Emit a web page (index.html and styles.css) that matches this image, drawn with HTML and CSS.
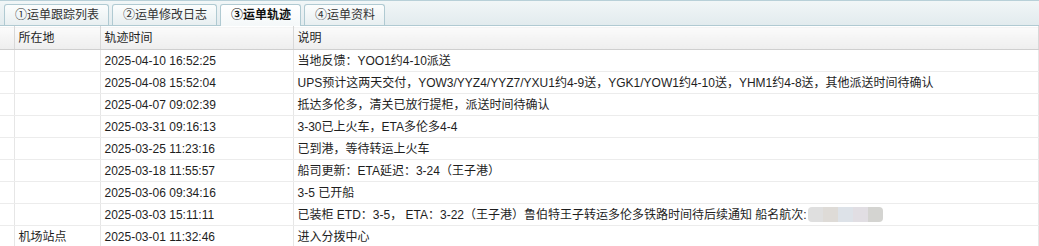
FILE: index.html
```html
<!DOCTYPE html>
<html lang="zh-CN">
<head>
  <meta charset="UTF-8">
  <title>运单轨迹</title>
  <link rel="stylesheet" href="styles.css">
</head>
<body>
  <div class="tabs">
    <div class="tab">①运单跟踪列表</div>
    <div class="tab">②运单修改日志</div>
    <div class="tab tab-active">③运单轨迹</div>
    <div class="tab">④运单资料</div>
  </div>

  <table class="grid">
    <colgroup>
      <col class="col-num">
      <col class="col-place">
      <col class="col-time">
      <col>
    </colgroup>
    <thead>
      <tr>
        <th></th>
        <th>所在地</th>
        <th>轨迹时间</th>
        <th>说明</th>
      </tr>
    </thead>
    <tbody>
      <tr><td></td><td></td><td>2025-04-10 16:52:25</td><td>当地反馈：YOO1约4-10派送</td></tr>
      <tr><td></td><td></td><td>2025-04-08 15:52:04</td><td>UPS预计这两天交付，YOW3/YYZ4/YYZ7/YXU1约4-9送，YGK1/YOW1约4-10送，YHM1约4-8送，其他派送时间待确认</td></tr>
      <tr><td></td><td></td><td>2025-04-07 09:02:39</td><td>抵达多伦多，清关已放行提柜，派送时间待确认</td></tr>
      <tr><td></td><td></td><td>2025-03-31 09:16:13</td><td>3-30已上火车，ETA多伦多4-4</td></tr>
      <tr><td></td><td></td><td>2025-03-25 11:23:16</td><td>已到港，等待转运上火车</td></tr>
      <tr><td></td><td></td><td>2025-03-18 11:55:57</td><td>船司更新：ETA延迟：3-24（王子港）</td></tr>
      <tr><td></td><td></td><td>2025-03-06 09:34:16</td><td>3-5 已开船</td></tr>
      <tr><td></td><td></td><td>2025-03-03 15:11:11</td><td>已装柜 ETD：3-5， ETA：3-22（王子港）鲁伯特王子转运多伦多铁路时间待后续通知 船名航次:<span class="blur"><i></i><i></i><i></i><i></i><i></i></span></td></tr>
      <tr><td></td><td>机场站点</td><td>2025-03-01 11:32:46</td><td>进入分拨中心</td></tr>
    </tbody>
  </table>
</body>
</html>
```

FILE: styles.css
```css
body {
  margin: 0;
  font-family: Arial, "Liberation Sans", "Noto Sans CJK SC", sans-serif;
  font-size: 12px;
  line-height: 16px;
  color: #1e1e1e;
  background: #fff;
}

/* tab strip */
.tabs {
  display: flex;
  gap: 3px;
  height: 21px;
  padding: 3px 0 0 4px;
  border-top: 1px solid #b8d0d8;
  border-bottom: 1px solid #b0cad2;
  background: linear-gradient(#f1f6f7 0%, #e2ebee 100%);
}
.tab {
  height: 20px;
  line-height: 20px;
  padding: 0 9px 0 10px;
  border: 1px solid #b0cad2;
  border-bottom: none;
  border-radius: 3px 3px 0 0;
  background: linear-gradient(#fbfdfd 0%, #e8eff1 100%);
  color: #333;
}
.tab-active {
  height: 21px;
  margin-bottom: -1px;
  background: linear-gradient(#ffffff 0%, #f4f8f9 100%);
  font-weight: bold;
  color: #111;
}

/* grid */
.grid {
  width: 100%;
  border-collapse: collapse;
  table-layout: fixed;
  border-top: 1px solid #fff;
}
.col-num { width: 14px; }
.col-place { width: 86px; }
.col-time { width: 193px; }

.grid th,
.grid td {
  height: 21px;
  padding: 0 4px;
  border-right: 1px solid #e6e6e6;
  border-bottom: 1px solid #ececec;
  text-align: left;
  font-weight: normal;
  white-space: nowrap;
  overflow: hidden;
  vertical-align: middle;
}
.grid th {
  height: 22px;
  background: linear-gradient(#fbfbfb 0%, #eeeeee 100%);
  border-right: 1px solid #d8d8d8;
  border-bottom: 1px solid #cfcfcf;
  color: #1e1e1e;
}
.grid th:first-child,
.grid td:first-child {
  padding: 0;
}

.blur {
  display: inline-flex;
  vertical-align: top;
  height: 15px;
  margin-left: 1px;
  border-radius: 4px;
  overflow: hidden;
}
.blur i {
  display: block;
  width: 15px;
  height: 15px;
  background: #dfdfdf;
}
.blur i:nth-child(2) { background: #dedbd7; }
.blur i:nth-child(3) { background: #dde2e8; }
.blur i:nth-child(4) { background: #e1dee3; }
.blur i:nth-child(5) { background: #d4d4d1; }
```
